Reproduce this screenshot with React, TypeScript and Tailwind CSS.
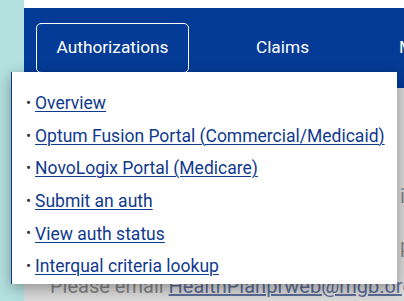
const items = [
  'Overview',
  'Optum Fusion Portal (Commercial/Medicaid)',
  'NovoLogix Portal (Medicare)',
  'Submit an auth',
  'View auth status',
  'Interqual criteria lookup',
]

export default function App() {
  return (
    <div className="relative flex h-[301px] w-[404px] overflow-hidden bg-white font-['Roboto',sans-serif]">
      <div className="w-[24px] shrink-0 bg-[#b4e1e0]" />
      <div className="flex min-w-0 flex-1 flex-col">
        <div className="h-[8px] bg-white" />
        <nav className="flex h-[80px] items-start gap-[17px] whitespace-nowrap bg-[#033b96] pl-[12px] pt-[15px] text-[17.3px] text-white">
          <div className="flex h-[50px] w-[153px] shrink-0 items-center justify-center rounded-[5px] border border-white">
            Authorizations
          </div>
          <div className="flex h-[50px] w-[153px] shrink-0 items-center justify-center">Claims</div>
          <div className="flex h-[50px] shrink-0 items-center pl-[23px]">Medical</div>
        </nav>
        <div className="flex-1 bg-[#dadada] pl-[26px] pt-[95px] text-[20px] leading-[26px] text-[#858585]">
          <p className="whitespace-nowrap pl-[350px]">information</p>
          <p className="mt-[24px] whitespace-nowrap pl-[350px]">page</p>
          <p className="mt-[14px] whitespace-nowrap">
            Please email{' '}
            <span className="text-[#5b6c96] underline">HealthPlanprweb@mgb.org</span>
          </p>
        </div>
      </div>

      <div className="absolute left-[11px] top-[72px] h-[212px] w-[386px] border-l border-[#0b3a8c] bg-white pt-[15px] shadow-[0_4px_14px_rgba(0,0,0,0.35)]">
        <ul className="text-[17.5px]">
          {items.map(item => (
            <li key={item} className="flex h-[32.6px] items-center whitespace-nowrap pl-[14px]">
              <span className="mr-[4px] text-[15px] text-[#333]">•</span>
              <a href="#" className="text-[#0f3a8e] underline decoration-1 underline-offset-2">{item}</a>
            </li>
          ))}
        </ul>
      </div>
    </div>
  )
}
